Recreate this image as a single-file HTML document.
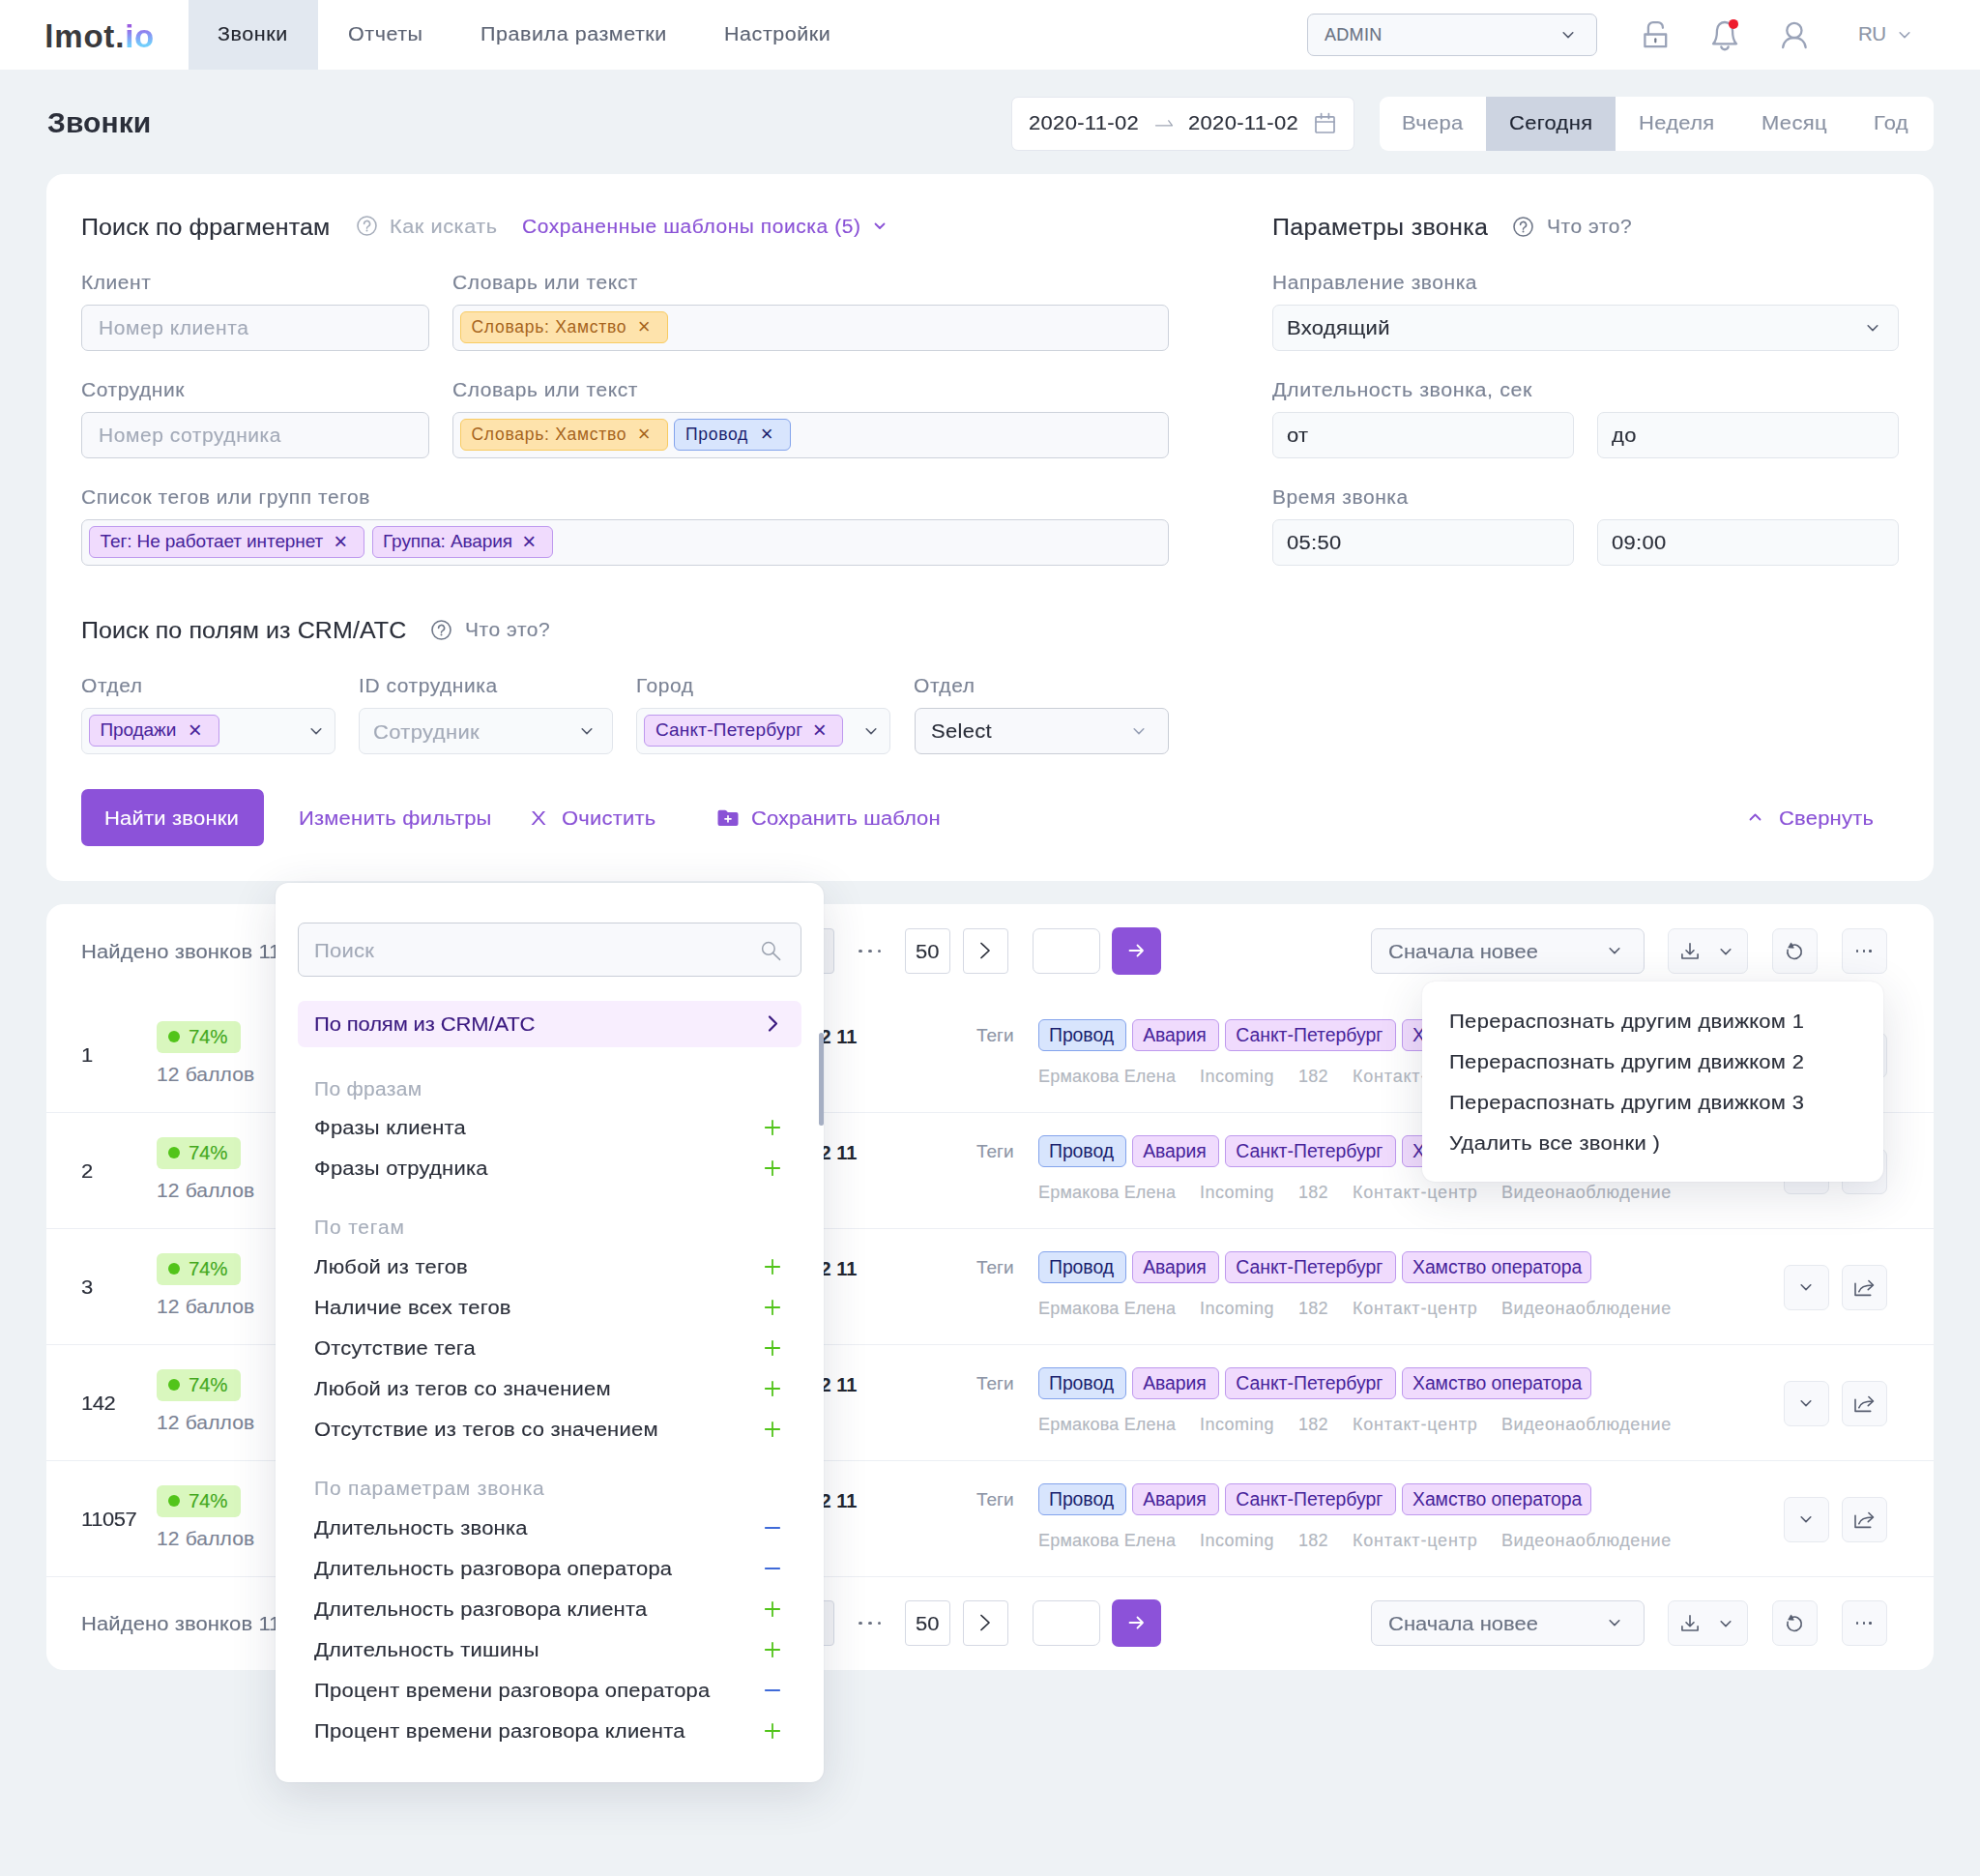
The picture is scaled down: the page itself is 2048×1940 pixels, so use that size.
<!DOCTYPE html>
<html lang="ru">
<head>
<meta charset="utf-8">
<title>Звонки</title>
<style>
*{box-sizing:border-box;margin:0;padding:0}
html,body{width:2048px;height:1940px;overflow:hidden}
body{background:#eef2f5;font-family:"Liberation Sans",sans-serif;color:#2b2f3a;position:relative;font-size:22px}
.abs{position:absolute}
.t{position:absolute;white-space:nowrap;line-height:1;-webkit-text-stroke:.12px currentColor;transform-origin:0 50%}
svg{position:absolute;overflow:visible}
/* nav */
.nav{position:absolute;left:0;top:0;width:2048px;height:72px;background:#fff}
.logo{-webkit-text-stroke:0;left:46.300px;top:20.500px;font-size:33px;font-weight:700;letter-spacing:.8px;color:#3a3a3d}
.logo b{font-weight:700;background:linear-gradient(175deg,#9a5ce0 24%,#8a8ef3 44%,#72cdfb 72%);-webkit-background-clip:text;background-clip:text;color:transparent}
.tab-active{position:absolute;left:195px;top:0;width:134px;height:72px;background:#e2e8f0}
.navt{font-size:20px;line-height:21.500px;letter-spacing:.51px;transform:scaleX(1.075);top:25.300px;color:#5d6474}
.seg{font-size:20.400px;line-height:22px;letter-spacing:.28px;transform:scaleX(1.078);color:#8a92a3}
.sel{position:absolute;border:1.500px solid #c6ccd8;border-radius:7px;background:#f7f9fc}
/* header row */
.box{position:absolute;background:#fff;border-radius:7px}
.card{position:absolute;left:48px;width:1952px;background:#fff;border-radius:18px}
.h2{margin-top:1.600px;font-size:23px;line-height:25px;letter-spacing:.32px;transform:scaleX(1.087);color:#2b2f3a}
.lbl{font-size:20px;line-height:21px;letter-spacing:.524px;transform:scaleX(1.05);color:#7b8395}
.hint{font-size:20px;line-height:21px;letter-spacing:.524px;transform:scaleX(1.05);color:#a7aebb}
.hint2{font-size:20px;line-height:21px;letter-spacing:.524px;transform:scaleX(1.05);color:#7b8395}
.pur{color:#8a52d6}
.ph{font-size:20px;line-height:21px;letter-spacing:.524px;transform:scaleX(1.05);color:#a3aab8}
.val{font-size:20px;line-height:22px;letter-spacing:.27px;transform:scaleX(1.1);color:#2b2f3a}
.val.dt{font-size:21px;transform:scaleX(1.048);letter-spacing:.29px}
.ph.big{font-size:20px;line-height:22px;transform:scaleX(1.1)}
.inp{position:absolute;height:48px;border:1.500px solid #cdd2db;border-radius:7px;background:#f8f9fc}
.tag{position:absolute;height:33px;border-radius:6px;border:1.500px solid;font-size:19px;letter-spacing:-.1px;line-height:30.500px;white-space:nowrap;padding-left:10.500px}
.inp.lt{border-color:#e1e5eb;background:#f8fafc}
.tag i{font-style:normal;position:absolute;right:16.700px;top:0;font-size:24px;letter-spacing:0}
.btn{margin-top:1px;font-size:20px;line-height:22px;letter-spacing:.18px;transform:scaleX(1.1)}
.found{margin-top:1px;font-size:20px;line-height:22px;letter-spacing:.09px;transform:scaleX(1.1);color:#6a7283}
.pg{position:absolute;height:47px;border:1.500px solid #d5d9e3;border-radius:4px;background:#fff}
.dots b{display:inline-block;position:absolute;top:0;width:3.700px;height:3.700px;border-radius:50%;background:#6b7282}
.dots b:nth-child(2){left:9.900px}.dots b:nth-child(3){left:19.800px}
.dots.sm b{width:2.400px;height:2.400px;background:#565d6f}
.dots.sm b:nth-child(2){left:6.800px}.dots.sm b:nth-child(3){left:13.600px}
.ib{position:absolute;height:47px;border:1.500px solid #e6e9ef;border-radius:7px;background:#f8f9fc}
.badge{width:87px;height:33px;border-radius:6px;background:#d9f7be}
.tag.r{padding-left:10px;height:32.500px;line-height:30.500px;font-size:19.400px;letter-spacing:-.05px}
.meta{margin-top:.7px;font-size:18px;letter-spacing:.2px;color:#b2b7c0}
.pop{position:absolute;background:#fff;border-radius:13px;box-shadow:0 12px 48px rgba(40,50,80,.14),0 0 2px rgba(40,50,80,.1)}
.mi{margin-top:.2px;font-size:20px;line-height:22px;letter-spacing:.18px;transform:scaleX(1.1);color:#2b2f3a}
.mh{margin-top:.6px;font-size:20px;line-height:21px;letter-spacing:.285px;transform:scaleX(1.05);color:#a7aebb}
.tg-y{background:#fee3ac;border-color:#f8cb62;color:#a6641c}
.tg-y,.tg-b.f{font-size:17.500px;letter-spacing:.72px;padding-left:11px}.tg-y i,.tg-b.f i{font-size:22px;right:17.500px}
.tg-b{background:#d8e5fd;border-color:#83a3ec;color:#1a1f6e}
.tg-p{background:#f0dbfd;border-color:#be99ee;color:#47239a}
</style>
</head>
<body>

<svg width="0" height="0" style="left:0;top:0"><defs>
<g id="q"><circle cx="10.5" cy="10.5" r="9.5" fill="none" stroke="#a7aebb" stroke-width="1.6"/><path d="M7.6 8.4a3 3 0 1 1 4.3 2.7c-.9.5-1.4 1-1.4 2" fill="none" stroke="#a7aebb" stroke-width="1.6" stroke-linecap="round"/><circle cx="10.5" cy="15.6" r="1" fill="#a7aebb"/></g>
<g id="q2"><circle cx="10.5" cy="10.5" r="9.5" fill="none" stroke="#6f7788" stroke-width="1.6"/><path d="M7.6 8.4a3 3 0 1 1 4.3 2.7c-.9.5-1.4 1-1.4 2" fill="none" stroke="#6f7788" stroke-width="1.6" stroke-linecap="round"/><circle cx="10.5" cy="15.6" r="1" fill="#6f7788"/></g>
</defs></svg>

<!-- NAV -->
<div class="nav">
  <div class="t logo">lmot.<b>io</b></div>
  <div class="tab-active"></div>
  <div class="t navt" style="left:225px;color:#23262f">Звонки</div>
  <div class="t navt" style="left:360px">Отчеты</div>
  <div class="t navt" style="left:497px">Правила разметки</div>
  <div class="t navt" style="left:749px">Настройки</div>
  <div class="sel" style="left:1352px;top:14px;width:300px;height:44px"></div>
  <div class="t" style="left:1370px;top:27px;font-size:18px;letter-spacing:.3px;color:#6a7283">ADMIN</div>
  <div class="t" style="left:1922px;top:25px;font-size:20.5px;letter-spacing:-.6px;color:#8d95a6">RU</div>
  <svg style="left:1615px;top:32px" width="14" height="9" viewBox="0 0 14 9"><path d="M2.200 1.800l4.800 4.800 4.800-4.800" fill="none" stroke="#565d6f" stroke-width="1.600" stroke-linecap="round" stroke-linejoin="round"/></svg>
  <svg style="left:1698px;top:20px" width="30" height="32" viewBox="0 0 30 32"><rect x="3.400" y="15.500" width="21.800" height="12.700" fill="none" stroke="#9aa3b8" stroke-width="2.300" stroke-linejoin="round"/><path d="M6.900 15.500V8.200a5 5 0 0 1 5-5h5a5 5 0 0 1 5 5v.6" fill="none" stroke="#9aa3b8" stroke-width="2.300" stroke-linecap="round"/><path d="M14.300 20.300v3" stroke="#6f7788" stroke-width="2.200" stroke-linecap="round"/></svg>
  <svg style="left:1768px;top:19px" width="32" height="36" viewBox="0 0 32 36"><path d="M4 26.300c2.500-2.300 4-6 4-14.300a8 8 0 0 1 16 0c0 8.300 1.500 12 4 14.300z" fill="none" stroke="#9aa3b8" stroke-width="2.300" stroke-linejoin="round"/><path d="M12.300 29.300a3.800 3.800 0 0 0 7.400 0" fill="none" stroke="#9aa3b8" stroke-width="2.300" stroke-linecap="round"/><circle cx="25" cy="5.900" r="5" fill="#ee1c2e"/></svg>
  <svg style="left:1840px;top:19px" width="32" height="34" viewBox="0 0 32 34"><circle cx="15.900" cy="12.500" r="7.600" fill="none" stroke="#9aa3b8" stroke-width="2.300"/><path d="M4.200 30c.5-6 5-10 11.700-10s11.200 4 11.700 10" fill="none" stroke="#9aa3b8" stroke-width="2.300" stroke-linecap="round"/></svg>
  <svg style="left:1963px;top:32px" width="14" height="9" viewBox="0 0 14 9"><path d="M2.200 1.800l4.800 4.800 4.800-4.800" fill="none" stroke="#9aa3b8" stroke-width="1.600" stroke-linecap="round" stroke-linejoin="round"/></svg>
</div>

<!-- PAGE HEADER -->
<div class="t" style="left:49px;top:112px;-webkit-text-stroke:0;font-size:29px;line-height:30px;transform:scaleX(1.035);font-weight:700;letter-spacing:.1px;color:#2b2f3a">Звонки</div>
<div class="box" style="left:1046px;top:100px;width:355px;height:56px;border:1px solid #e4e7ee"></div>
<div class="t val dt" style="left:1064px;top:116.300px">2020-11-02</div>
<div class="t val dt" style="left:1229px;top:116.300px">2020-11-02</div>
<svg style="left:1195px;top:123px" width="18" height="8" viewBox="0 0 18 8"><path d="M.5 6.800h17L13.800 1.800" fill="none" stroke="#a0a7b5" stroke-width="1.300" stroke-linecap="round" stroke-linejoin="round"/></svg>
<svg style="left:1359px;top:116px" width="23" height="23" viewBox="0 0 23 23"><rect x="2" y="4.800" width="19" height="16.200" rx="1" fill="none" stroke="#9aa3b8" stroke-width="1.700"/><path d="M2 10h19M7.600 1.500v5M15.400 1.500v5" stroke="#9aa3b8" stroke-width="1.700" stroke-linecap="round"/></svg>
<div class="box" style="left:1427px;top:100px;width:573px;height:56px;border-radius:9px"></div>
<div class="abs" style="left:1537px;top:100px;width:134px;height:56px;background:#cdd4e1"></div>
<div class="t seg" style="left:1450px;top:116.200px">Вчера</div>
<div class="t seg" style="left:1561px;top:116.200px;color:#1f2533">Сегодня</div>
<div class="t seg" style="left:1695px;top:116.200px">Неделя</div>
<div class="t seg" style="left:1822px;top:116.200px">Месяц</div>
<div class="t seg" style="left:1938px;top:116.200px">Год</div>

<!-- CARD 1: FILTERS -->
<div class="card" id="card1" style="top:180px;height:731px"></div>

<div class="t h2" style="left:84px;top:221px;letter-spacing:.1px">Поиск по фрагментам</div>
<svg class="qi" style="left:369px;top:223.300px" width="21" height="21" viewBox="0 0 21 21"><use href="#q"/></svg>
<div class="t hint" style="left:403px;top:223.500px;transform:scaleX(1.085)">Как искать</div>
<div class="t hint pur" style="left:540px;top:224px">Сохраненные шаблоны поиска (5)</div>
<svg style="left:904px;top:230px" width="12" height="8" viewBox="0 0 12 8"><path d="M1.5 1.5 6 6l4.5-4.5" fill="none" stroke="#8a52d6" stroke-width="1.8" stroke-linecap="round" stroke-linejoin="round"/></svg>

<div class="t lbl" style="left:84px;top:282px">Клиент</div>
<div class="inp" style="left:84px;top:315px;width:360px"></div>
<div class="t ph" style="left:102px;top:329px">Номер клиента</div>
<div class="t lbl" style="left:468px;top:282px">Словарь или текст</div>
<div class="inp" style="left:468px;top:315px;width:741px"></div>
<div class="tag tg-y" style="left:475.500px;top:322px;width:215.500px">Словарь: Хамство<i>×</i></div>

<div class="t lbl" style="left:84px;top:393px">Сотрудник</div>
<div class="inp" style="left:84px;top:426px;width:360px"></div>
<div class="t ph" style="left:102px;top:440px">Номер сотрудника</div>
<div class="t lbl" style="left:468px;top:393px">Словарь или текст</div>
<div class="inp" style="left:468px;top:426px;width:741px"></div>
<div class="tag tg-y" style="left:475.500px;top:433px;width:215.500px">Словарь: Хамство<i>×</i></div>
<div class="tag tg-b f" style="left:697px;top:433px;width:121px">Провод<i>×</i></div>

<div class="t lbl" style="left:84px;top:504px">Список тегов или групп тегов</div>
<div class="inp" style="left:84px;top:537px;width:1125px"></div>
<div class="tag tg-p" style="left:92px;top:544px;width:285px">Тег: Не работает интернет<i>×</i></div>
<div class="tag tg-p" style="left:384.500px;top:544px;width:187.500px">Группа: Авария<i>×</i></div>

<div class="t h2" style="left:1316px;top:221px">Параметры звонка</div>
<svg class="qi" style="left:1565px;top:224px" width="21" height="21" viewBox="0 0 21 21"><use href="#q2"/></svg>
<div class="t hint2" style="left:1600px;top:224px">Что это?</div>
<div class="t lbl" style="left:1316px;top:282px">Направление звонка</div>
<div class="inp lt" style="left:1316px;top:315px;width:648px"></div>
<div class="t val" style="left:1331px;top:328px">Входящий</div>
<svg style="left:1930px;top:335px" width="14" height="9" viewBox="0 0 14 9"><path d="M2.200 1.800l4.800 4.800 4.800-4.800" fill="none" stroke="#565d6f" stroke-width="1.600" stroke-linecap="round" stroke-linejoin="round"/></svg>
<div class="t lbl" style="left:1316px;top:393px;transform:scaleX(1.072)">Длительность звонка, сек</div>
<div class="inp lt" style="left:1316px;top:426px;width:312px"></div>
<div class="t val" style="left:1331px;top:439px">от</div>
<div class="inp lt" style="left:1652px;top:426px;width:312px"></div>
<div class="t val" style="left:1667px;top:439px">до</div>
<div class="t lbl" style="left:1316px;top:504px">Время звонка</div>
<div class="inp lt" style="left:1316px;top:537px;width:312px"></div>
<div class="t val" style="left:1331px;top:550px">05:50</div>
<div class="inp lt" style="left:1652px;top:537px;width:312px"></div>
<div class="t val" style="left:1667px;top:550px">09:00</div>

<div class="t h2" style="left:84px;top:638px;letter-spacing:.08px">Поиск по полям из CRM/ATC</div>
<svg class="qi" style="left:446px;top:641px" width="21" height="21" viewBox="0 0 21 21"><use href="#q2"/></svg>
<div class="t hint2" style="left:481px;top:641px">Что это?</div>

<div class="t lbl" style="left:84px;top:699px">Отдел</div>
<div class="inp lt" style="left:84px;top:732px;width:263px"></div>
<div class="tag tg-p" style="left:92px;top:739px;width:134.500px">Продажи<i>×</i></div>
<svg style="left:320px;top:752px" width="14" height="9" viewBox="0 0 14 9"><path d="M2.200 1.800l4.800 4.800 4.800-4.800" fill="none" stroke="#565d6f" stroke-width="1.600" stroke-linecap="round" stroke-linejoin="round"/></svg>
<div class="t lbl" style="left:371px;top:699px">ID сотрудника</div>
<div class="inp lt" style="left:371px;top:732px;width:263px"></div>
<div class="t ph big" style="left:386px;top:746px;letter-spacing:.32px">Сотрудник</div>
<svg style="left:600px;top:752px" width="14" height="9" viewBox="0 0 14 9"><path d="M2.200 1.800l4.800 4.800 4.800-4.800" fill="none" stroke="#565d6f" stroke-width="1.600" stroke-linecap="round" stroke-linejoin="round"/></svg>
<div class="t lbl" style="left:658px;top:699px">Город</div>
<div class="inp lt" style="left:658px;top:732px;width:263px"></div>
<div class="tag tg-p" style="left:666.400px;top:739px;width:206px;letter-spacing:.23px">Санкт-Петербург<i>×</i></div>
<svg style="left:894px;top:752px" width="14" height="9" viewBox="0 0 14 9"><path d="M2.200 1.800l4.800 4.800 4.800-4.800" fill="none" stroke="#565d6f" stroke-width="1.600" stroke-linecap="round" stroke-linejoin="round"/></svg>
<div class="t lbl" style="left:945px;top:699px">Отдел</div>
<div class="inp" style="left:945.500px;top:732px;width:263px;border-color:#c9cdd6"></div>
<div class="t val" style="left:963px;top:745px">Select</div>
<svg style="left:1171px;top:752px" width="14" height="9" viewBox="0 0 14 9"><path d="M2.200 1.800l4.800 4.800 4.800-4.800" fill="none" stroke="#9aa3b8" stroke-width="1.600" stroke-linecap="round" stroke-linejoin="round"/></svg>

<div class="abs" style="left:84px;top:816px;width:189px;height:59px;background:#8c52d9;border-radius:7px"></div>
<div class="t btn" style="left:108px;top:834px;color:#fff">Найти звонки</div>
<div class="t btn pur" style="left:309px;top:834px">Изменить фильтры</div>
<div class="t btn pur" style="left:548.500px;top:834px;letter-spacing:0;-webkit-text-stroke:0;transform:scaleX(1.2)">X</div>
<div class="t btn pur" style="left:581px;top:834px">Очистить</div>
<svg style="left:742px;top:837px" width="22" height="18" viewBox="0 0 22 18"><path d="M2.500 .8h5.300c.7 0 1.200.3 1.700.8l1.300 1.500h8.700a2 2 0 0 1 2 2v9.800a2 2 0 0 1-2 2h-17a2 2 0 0 1-2-2V2.800a2 2 0 0 1 2-2z" fill="#8a52d6"/><path d="M11 6.800v6M8 9.800h6" stroke="#fff" stroke-width="1.700" stroke-linecap="round"/></svg>
<div class="t btn pur" style="left:777px;top:834px;letter-spacing:.07px">Сохранить шаблон</div>
<div class="t btn pur" style="left:1840px;top:834px">Свернуть</div>
<svg style="left:1809px;top:840px" width="13" height="9" viewBox="0 0 13 9"><path d="M1.5 7.5l5-5 5 5" fill="none" stroke="#8a52d6" stroke-width="1.8" stroke-linecap="round" stroke-linejoin="round"/></svg>

<!-- CARD 2: RESULTS -->
<div class="card" id="card2" style="top:935px;height:792px"></div>
<div class="t found" style="left:84px;top:972px">Найдено звонков 11</div>
<div class="pg" style="left:820px;top:960px;width:43px;background:#f2f3f6"></div>
<div class="abs dots" style="left:888px;top:981.5px"><b></b><b></b><b></b></div>
<div class="pg" style="left:936px;top:960px;width:47px"></div><div class="t val" style="left:947px;top:973px;letter-spacing:0">50</div>
<div class="pg" style="left:996px;top:960px;width:47px"></div>
<svg style="left:1013px;top:974px" width="12" height="18" viewBox="0 0 12 18"><path d="M2 1.5l8 7.5-8 7.5" fill="none" stroke="#2b2f3a" stroke-width="1.7" stroke-linecap="round" stroke-linejoin="round"/></svg>
<div class="pg" style="left:1068px;top:960px;width:70px;border-radius:7px"></div>
<div class="abs" style="left:1150px;top:959.4px;width:51px;height:48.200px;border-radius:7px;background:#8c52d9"></div>
<svg style="left:1167px;top:976px" width="17" height="14" viewBox="0 0 17 14"><path d="M1.5 7h13.5M9.5 1.5L15 7l-5.500 5.500" fill="none" stroke="#fff" stroke-width="1.8" stroke-linecap="round" stroke-linejoin="round"/></svg>
<div class="inp" style="left:1418px;top:960px;width:283px;height:47px;border-color:#d5d9e3"></div>
<div class="t val" style="left:1436px;top:973px;color:#6a7283;letter-spacing:0">Сначала новее</div>
<svg style="left:1663px;top:979px" width="14" height="9" viewBox="0 0 14 9"><path d="M2.200 1.800l4.800 4.800 4.800-4.800" fill="none" stroke="#565d6f" stroke-width="1.600" stroke-linecap="round" stroke-linejoin="round"/></svg>
<div class="ib" style="left:1724.500px;top:960px;width:83px"></div>
<svg style="left:1739px;top:975px" width="18" height="17" viewBox="0 0 18 17"><path d="M9 .8v11M5 7.800l4 4 4-4M.9 11.800v4.200h16.200v-4.200" fill="none" stroke="#565d6f" stroke-width="1.600" stroke-linecap="round" stroke-linejoin="round"/></svg>
<svg style="left:1777.500px;top:980px" width="14" height="9" viewBox="0 0 14 9"><path d="M2.200 1.800l4.800 4.800 4.800-4.800" fill="none" stroke="#565d6f" stroke-width="1.600" stroke-linecap="round" stroke-linejoin="round"/></svg>
<div class="ib" style="left:1832.500px;top:960px;width:47px"></div>
<svg style="left:1846px;top:974px" width="20" height="20" viewBox="0 0 20 20"><path d="M7.300 3.600A7.200 7.200 0 1 1 3.100 8.300" fill="none" stroke="#565d6f" stroke-width="1.600" stroke-linecap="round"/><path d="M6.600 .9L3.700 5.900l5.600 .3z" fill="#565d6f" stroke="#565d6f" stroke-width=".8" stroke-linejoin="round"/></svg>
<div class="ib" style="left:1904.500px;top:960px;width:47px"></div>
<div class="abs dots sm" style="left:1919.800px;top:982.2px"><b></b><b></b><b></b></div>
<div class="t val" style="left:84px;top:1080px;letter-spacing:-.4px;margin-top:-.2px">1</div>
<div class="abs badge" style="left:162px;top:1055.7px"></div><div class="abs" style="left:174px;top:1066px;width:12px;height:12px;border-radius:50%;background:#52c41a"></div>
<div class="t" style="left:195px;top:1062px;font-size:20.500px;letter-spacing:-.3px;color:#43a81d">74%</div>
<div class="t" style="left:162px;top:1100px;font-size:21px;letter-spacing:.15px;color:#7b8395">12 баллов</div>
<div class="t" style="left:848.500px;top:1062px;font-size:20px;font-weight:700;-webkit-text-stroke:0;letter-spacing:0;color:#23262f">2 11</div>
<div class="t" style="left:1010px;top:1061px;font-size:19px;color:#8d95a6">Теги</div>
<div class="tag tg-b r" style="left:1074px;top:1054px;width:91px">Провод</div>
<div class="tag tg-p r" style="left:1171.200px;top:1054px;width:90px">Авария</div>
<div class="tag tg-p r" style="left:1267.200px;top:1054px;width:177px;letter-spacing:0">Санкт-Петербург</div>
<div class="tag tg-p r" style="left:1450px;top:1054px;width:196px">Хамство оператора</div>
<div class="t meta" style="left:1074px;top:1103px">Ермакова Елена</div>
<div class="t meta" style="left:1241px;top:1103px;letter-spacing:.5px">Incoming</div>
<div class="t meta" style="left:1343px;top:1103px">182</div>
<div class="t meta" style="left:1399px;top:1103px;letter-spacing:.8px">Контакт-центр</div>
<div class="t meta" style="left:1553px;top:1103px;letter-spacing:.6px">Видеонаоблюдение</div>
<div class="ib" style="left:1844.500px;top:1068px;width:47px"></div>
<svg style="left:1861px;top:1087px" width="14" height="9" viewBox="0 0 14 9"><path d="M2.200 1.800l4.800 4.800 4.800-4.800" fill="none" stroke="#565d6f" stroke-width="1.600" stroke-linecap="round" stroke-linejoin="round"/></svg>
<div class="ib" style="left:1904.500px;top:1068px;width:47px"></div>
<svg style="left:1917px;top:1083px" width="22" height="18" viewBox="0 0 22 18"><path d="M2 4.200V16.400H17.700M5.800 12.700C7.200 8.400 11 6 19.800 6M15.900 1.500L20.500 6l-5.200 4.700" fill="none" stroke="#565d6f" stroke-width="1.600" stroke-linecap="round" stroke-linejoin="round"/></svg>
<div class="abs" style="left:48px;top:1150px;width:1952px;height:1px;background:#eceff4"></div>
<div class="t val" style="left:84px;top:1200px;letter-spacing:-.4px;margin-top:-.2px">2</div>
<div class="abs badge" style="left:162px;top:1175.7px"></div><div class="abs" style="left:174px;top:1186px;width:12px;height:12px;border-radius:50%;background:#52c41a"></div>
<div class="t" style="left:195px;top:1182px;font-size:20.500px;letter-spacing:-.3px;color:#43a81d">74%</div>
<div class="t" style="left:162px;top:1220px;font-size:21px;letter-spacing:.15px;color:#7b8395">12 баллов</div>
<div class="t" style="left:848.500px;top:1182px;font-size:20px;font-weight:700;-webkit-text-stroke:0;letter-spacing:0;color:#23262f">2 11</div>
<div class="t" style="left:1010px;top:1181px;font-size:19px;color:#8d95a6">Теги</div>
<div class="tag tg-b r" style="left:1074px;top:1174px;width:91px">Провод</div>
<div class="tag tg-p r" style="left:1171.200px;top:1174px;width:90px">Авария</div>
<div class="tag tg-p r" style="left:1267.200px;top:1174px;width:177px;letter-spacing:0">Санкт-Петербург</div>
<div class="tag tg-p r" style="left:1450px;top:1174px;width:196px">Хамство оператора</div>
<div class="t meta" style="left:1074px;top:1223px">Ермакова Елена</div>
<div class="t meta" style="left:1241px;top:1223px;letter-spacing:.5px">Incoming</div>
<div class="t meta" style="left:1343px;top:1223px">182</div>
<div class="t meta" style="left:1399px;top:1223px;letter-spacing:.8px">Контакт-центр</div>
<div class="t meta" style="left:1553px;top:1223px;letter-spacing:.6px">Видеонаоблюдение</div>
<div class="ib" style="left:1844.500px;top:1188px;width:47px"></div>
<svg style="left:1861px;top:1207px" width="14" height="9" viewBox="0 0 14 9"><path d="M2.200 1.800l4.800 4.800 4.800-4.800" fill="none" stroke="#565d6f" stroke-width="1.600" stroke-linecap="round" stroke-linejoin="round"/></svg>
<div class="ib" style="left:1904.500px;top:1188px;width:47px"></div>
<svg style="left:1917px;top:1203px" width="22" height="18" viewBox="0 0 22 18"><path d="M2 4.200V16.400H17.700M5.800 12.700C7.200 8.400 11 6 19.800 6M15.900 1.500L20.500 6l-5.200 4.700" fill="none" stroke="#565d6f" stroke-width="1.600" stroke-linecap="round" stroke-linejoin="round"/></svg>
<div class="abs" style="left:48px;top:1270px;width:1952px;height:1px;background:#eceff4"></div>
<div class="t val" style="left:84px;top:1320px;letter-spacing:-.4px;margin-top:-.2px">3</div>
<div class="abs badge" style="left:162px;top:1295.7px"></div><div class="abs" style="left:174px;top:1306px;width:12px;height:12px;border-radius:50%;background:#52c41a"></div>
<div class="t" style="left:195px;top:1302px;font-size:20.500px;letter-spacing:-.3px;color:#43a81d">74%</div>
<div class="t" style="left:162px;top:1340px;font-size:21px;letter-spacing:.15px;color:#7b8395">12 баллов</div>
<div class="t" style="left:848.500px;top:1302px;font-size:20px;font-weight:700;-webkit-text-stroke:0;letter-spacing:0;color:#23262f">2 11</div>
<div class="t" style="left:1010px;top:1301px;font-size:19px;color:#8d95a6">Теги</div>
<div class="tag tg-b r" style="left:1074px;top:1294px;width:91px">Провод</div>
<div class="tag tg-p r" style="left:1171.200px;top:1294px;width:90px">Авария</div>
<div class="tag tg-p r" style="left:1267.200px;top:1294px;width:177px;letter-spacing:0">Санкт-Петербург</div>
<div class="tag tg-p r" style="left:1450px;top:1294px;width:196px">Хамство оператора</div>
<div class="t meta" style="left:1074px;top:1343px">Ермакова Елена</div>
<div class="t meta" style="left:1241px;top:1343px;letter-spacing:.5px">Incoming</div>
<div class="t meta" style="left:1343px;top:1343px">182</div>
<div class="t meta" style="left:1399px;top:1343px;letter-spacing:.8px">Контакт-центр</div>
<div class="t meta" style="left:1553px;top:1343px;letter-spacing:.6px">Видеонаоблюдение</div>
<div class="ib" style="left:1844.500px;top:1308px;width:47px"></div>
<svg style="left:1861px;top:1327px" width="14" height="9" viewBox="0 0 14 9"><path d="M2.200 1.800l4.800 4.800 4.800-4.800" fill="none" stroke="#565d6f" stroke-width="1.600" stroke-linecap="round" stroke-linejoin="round"/></svg>
<div class="ib" style="left:1904.500px;top:1308px;width:47px"></div>
<svg style="left:1917px;top:1323px" width="22" height="18" viewBox="0 0 22 18"><path d="M2 4.200V16.400H17.700M5.800 12.700C7.200 8.400 11 6 19.800 6M15.900 1.500L20.500 6l-5.200 4.700" fill="none" stroke="#565d6f" stroke-width="1.600" stroke-linecap="round" stroke-linejoin="round"/></svg>
<div class="abs" style="left:48px;top:1390px;width:1952px;height:1px;background:#eceff4"></div>
<div class="t val" style="left:84px;top:1440px;letter-spacing:-.4px;margin-top:-.2px">142</div>
<div class="abs badge" style="left:162px;top:1415.7px"></div><div class="abs" style="left:174px;top:1426px;width:12px;height:12px;border-radius:50%;background:#52c41a"></div>
<div class="t" style="left:195px;top:1422px;font-size:20.500px;letter-spacing:-.3px;color:#43a81d">74%</div>
<div class="t" style="left:162px;top:1460px;font-size:21px;letter-spacing:.15px;color:#7b8395">12 баллов</div>
<div class="t" style="left:848.500px;top:1422px;font-size:20px;font-weight:700;-webkit-text-stroke:0;letter-spacing:0;color:#23262f">2 11</div>
<div class="t" style="left:1010px;top:1421px;font-size:19px;color:#8d95a6">Теги</div>
<div class="tag tg-b r" style="left:1074px;top:1414px;width:91px">Провод</div>
<div class="tag tg-p r" style="left:1171.200px;top:1414px;width:90px">Авария</div>
<div class="tag tg-p r" style="left:1267.200px;top:1414px;width:177px;letter-spacing:0">Санкт-Петербург</div>
<div class="tag tg-p r" style="left:1450px;top:1414px;width:196px">Хамство оператора</div>
<div class="t meta" style="left:1074px;top:1463px">Ермакова Елена</div>
<div class="t meta" style="left:1241px;top:1463px;letter-spacing:.5px">Incoming</div>
<div class="t meta" style="left:1343px;top:1463px">182</div>
<div class="t meta" style="left:1399px;top:1463px;letter-spacing:.8px">Контакт-центр</div>
<div class="t meta" style="left:1553px;top:1463px;letter-spacing:.6px">Видеонаоблюдение</div>
<div class="ib" style="left:1844.500px;top:1428px;width:47px"></div>
<svg style="left:1861px;top:1447px" width="14" height="9" viewBox="0 0 14 9"><path d="M2.200 1.800l4.800 4.800 4.800-4.800" fill="none" stroke="#565d6f" stroke-width="1.600" stroke-linecap="round" stroke-linejoin="round"/></svg>
<div class="ib" style="left:1904.500px;top:1428px;width:47px"></div>
<svg style="left:1917px;top:1443px" width="22" height="18" viewBox="0 0 22 18"><path d="M2 4.200V16.400H17.700M5.800 12.700C7.200 8.400 11 6 19.800 6M15.900 1.500L20.500 6l-5.200 4.700" fill="none" stroke="#565d6f" stroke-width="1.600" stroke-linecap="round" stroke-linejoin="round"/></svg>
<div class="abs" style="left:48px;top:1510px;width:1952px;height:1px;background:#eceff4"></div>
<div class="t val" style="left:84px;top:1560px;letter-spacing:-.4px;margin-top:-.2px">11057</div>
<div class="abs badge" style="left:162px;top:1535.7px"></div><div class="abs" style="left:174px;top:1546px;width:12px;height:12px;border-radius:50%;background:#52c41a"></div>
<div class="t" style="left:195px;top:1542px;font-size:20.500px;letter-spacing:-.3px;color:#43a81d">74%</div>
<div class="t" style="left:162px;top:1580px;font-size:21px;letter-spacing:.15px;color:#7b8395">12 баллов</div>
<div class="t" style="left:848.500px;top:1542px;font-size:20px;font-weight:700;-webkit-text-stroke:0;letter-spacing:0;color:#23262f">2 11</div>
<div class="t" style="left:1010px;top:1541px;font-size:19px;color:#8d95a6">Теги</div>
<div class="tag tg-b r" style="left:1074px;top:1534px;width:91px">Провод</div>
<div class="tag tg-p r" style="left:1171.200px;top:1534px;width:90px">Авария</div>
<div class="tag tg-p r" style="left:1267.200px;top:1534px;width:177px;letter-spacing:0">Санкт-Петербург</div>
<div class="tag tg-p r" style="left:1450px;top:1534px;width:196px">Хамство оператора</div>
<div class="t meta" style="left:1074px;top:1583px">Ермакова Елена</div>
<div class="t meta" style="left:1241px;top:1583px;letter-spacing:.5px">Incoming</div>
<div class="t meta" style="left:1343px;top:1583px">182</div>
<div class="t meta" style="left:1399px;top:1583px;letter-spacing:.8px">Контакт-центр</div>
<div class="t meta" style="left:1553px;top:1583px;letter-spacing:.6px">Видеонаоблюдение</div>
<div class="ib" style="left:1844.500px;top:1548px;width:47px"></div>
<svg style="left:1861px;top:1567px" width="14" height="9" viewBox="0 0 14 9"><path d="M2.200 1.800l4.800 4.800 4.800-4.800" fill="none" stroke="#565d6f" stroke-width="1.600" stroke-linecap="round" stroke-linejoin="round"/></svg>
<div class="ib" style="left:1904.500px;top:1548px;width:47px"></div>
<svg style="left:1917px;top:1563px" width="22" height="18" viewBox="0 0 22 18"><path d="M2 4.200V16.400H17.700M5.800 12.700C7.200 8.400 11 6 19.800 6M15.900 1.500L20.500 6l-5.200 4.700" fill="none" stroke="#565d6f" stroke-width="1.600" stroke-linecap="round" stroke-linejoin="round"/></svg>
<div class="abs" style="left:48px;top:1630px;width:1952px;height:1px;background:#eceff4"></div>
<div class="t found" style="left:84px;top:1667px">Найдено звонков 11</div>
<div class="pg" style="left:820px;top:1655px;width:43px;background:#f2f3f6"></div>
<div class="abs dots" style="left:888px;top:1676.5px"><b></b><b></b><b></b></div>
<div class="pg" style="left:936px;top:1655px;width:47px"></div><div class="t val" style="left:947px;top:1668px;letter-spacing:0">50</div>
<div class="pg" style="left:996px;top:1655px;width:47px"></div>
<svg style="left:1013px;top:1669px" width="12" height="18" viewBox="0 0 12 18"><path d="M2 1.5l8 7.5-8 7.5" fill="none" stroke="#2b2f3a" stroke-width="1.7" stroke-linecap="round" stroke-linejoin="round"/></svg>
<div class="pg" style="left:1068px;top:1655px;width:70px;border-radius:7px"></div>
<div class="abs" style="left:1150px;top:1654.4px;width:51px;height:48.200px;border-radius:7px;background:#8c52d9"></div>
<svg style="left:1167px;top:1671px" width="17" height="14" viewBox="0 0 17 14"><path d="M1.5 7h13.5M9.5 1.5L15 7l-5.500 5.500" fill="none" stroke="#fff" stroke-width="1.8" stroke-linecap="round" stroke-linejoin="round"/></svg>
<div class="inp" style="left:1418px;top:1655px;width:283px;height:47px;border-color:#d5d9e3"></div>
<div class="t val" style="left:1436px;top:1668px;color:#6a7283;letter-spacing:0">Сначала новее</div>
<svg style="left:1663px;top:1674px" width="14" height="9" viewBox="0 0 14 9"><path d="M2.200 1.800l4.800 4.800 4.800-4.800" fill="none" stroke="#565d6f" stroke-width="1.600" stroke-linecap="round" stroke-linejoin="round"/></svg>
<div class="ib" style="left:1724.500px;top:1655px;width:83px"></div>
<svg style="left:1739px;top:1670px" width="18" height="17" viewBox="0 0 18 17"><path d="M9 .8v11M5 7.800l4 4 4-4M.9 11.800v4.200h16.200v-4.200" fill="none" stroke="#565d6f" stroke-width="1.600" stroke-linecap="round" stroke-linejoin="round"/></svg>
<svg style="left:1777.500px;top:1675px" width="14" height="9" viewBox="0 0 14 9"><path d="M2.200 1.800l4.800 4.800 4.800-4.800" fill="none" stroke="#565d6f" stroke-width="1.600" stroke-linecap="round" stroke-linejoin="round"/></svg>
<div class="ib" style="left:1832.500px;top:1655px;width:47px"></div>
<svg style="left:1846px;top:1669px" width="20" height="20" viewBox="0 0 20 20"><path d="M7.300 3.600A7.200 7.200 0 1 1 3.100 8.300" fill="none" stroke="#565d6f" stroke-width="1.600" stroke-linecap="round"/><path d="M6.600 .9L3.700 5.900l5.600 .3z" fill="#565d6f" stroke="#565d6f" stroke-width=".8" stroke-linejoin="round"/></svg>
<div class="ib" style="left:1904.500px;top:1655px;width:47px"></div>
<div class="abs dots sm" style="left:1919.800px;top:1677.2px"><b></b><b></b><b></b></div>

<!-- POPUP MENU -->
<div class="pop" style="left:1471px;top:1015px;width:477px;height:207px"></div>
<div class="t mi" style="left:1499px;top:1045px;letter-spacing:.27px;margin-top:0">Перераспознать другим движком 1</div>
<div class="t mi" style="left:1499px;top:1087px;letter-spacing:.27px;margin-top:0">Перераспознать другим движком 2</div>
<div class="t mi" style="left:1499px;top:1129px;letter-spacing:.27px;margin-top:0">Перераспознать другим движком 3</div>
<div class="t mi" style="left:1499px;top:1171px;letter-spacing:.27px;margin-top:0">Удалить все звонки )</div>

<!-- FILTER DROPDOWN -->
<div class="pop" style="left:285px;top:913px;width:567px;height:930px"></div>
<div class="inp" style="left:308px;top:953.700px;width:521px;height:56px;border-color:#c9ced7"></div>
<div class="t ph big" style="left:325px;top:972px;letter-spacing:.18px">Поиск</div>
<svg style="left:787px;top:972.500px" width="21" height="21" viewBox="0 0 21 21"><circle cx="7.900" cy="7.900" r="6.300" fill="none" stroke="#9ca3b0" stroke-width="1.500"/><path d="M12.600 12.600l7 6.800" stroke="#9ca3b0" stroke-width="1.500" stroke-linecap="round"/></svg>
<div class="abs" style="left:308px;top:1035px;width:521px;height:48px;border-radius:7px;background:#f8eefe"></div>
<div class="t mi" style="left:325px;top:1048px;color:#3b1a80;letter-spacing:-.12px">По полям из CRM/ATC</div>
<svg style="left:794px;top:1050px" width="11" height="17" viewBox="0 0 11 17"><path d="M2 1.500l7 7-7 7" fill="none" stroke="#3b1a80" stroke-width="2.200" stroke-linecap="round" stroke-linejoin="round"/></svg>
<div class="abs" style="left:847px;top:1068px;width:5px;height:96px;border-radius:3px;background:#a6afc3"></div>
<div class="t mh" style="left:325px;top:1115px">По фразам</div>
<div class="t mi" style="left:325px;top:1155px">Фразы клиента</div>
<svg style="left:791px;top:1158px" width="16" height="16" viewBox="0 0 16 16"><path d="M8 .8v14.400M.8 8h14.400" stroke="#52c41a" stroke-width="1.800" stroke-linecap="round"/></svg>
<div class="t mi" style="left:325px;top:1197px">Фразы отрудника</div>
<svg style="left:791px;top:1200px" width="16" height="16" viewBox="0 0 16 16"><path d="M8 .8v14.400M.8 8h14.400" stroke="#52c41a" stroke-width="1.800" stroke-linecap="round"/></svg>
<div class="t mh" style="left:325px;top:1258px;letter-spacing:.8px">По тегам</div>
<div class="t mi" style="left:325px;top:1299px">Любой из тегов</div>
<svg style="left:791px;top:1302px" width="16" height="16" viewBox="0 0 16 16"><path d="M8 .8v14.400M.8 8h14.400" stroke="#52c41a" stroke-width="1.800" stroke-linecap="round"/></svg>
<div class="t mi" style="left:325px;top:1341px">Наличие всех тегов</div>
<svg style="left:791px;top:1344px" width="16" height="16" viewBox="0 0 16 16"><path d="M8 .8v14.400M.8 8h14.400" stroke="#52c41a" stroke-width="1.800" stroke-linecap="round"/></svg>
<div class="t mi" style="left:325px;top:1383px">Отсутствие тега</div>
<svg style="left:791px;top:1386px" width="16" height="16" viewBox="0 0 16 16"><path d="M8 .8v14.400M.8 8h14.400" stroke="#52c41a" stroke-width="1.800" stroke-linecap="round"/></svg>
<div class="t mi" style="left:325px;top:1425px">Любой из тегов со значением</div>
<svg style="left:791px;top:1428px" width="16" height="16" viewBox="0 0 16 16"><path d="M8 .8v14.400M.8 8h14.400" stroke="#52c41a" stroke-width="1.800" stroke-linecap="round"/></svg>
<div class="t mi" style="left:325px;top:1467px">Отсутствие из тегов со значением</div>
<svg style="left:791px;top:1470px" width="16" height="16" viewBox="0 0 16 16"><path d="M8 .8v14.400M.8 8h14.400" stroke="#52c41a" stroke-width="1.800" stroke-linecap="round"/></svg>
<div class="t mh" style="left:325px;top:1528px;letter-spacing:.75px">По параметрам звонка</div>
<div class="t mi" style="left:325px;top:1569px">Длительность звонка</div>
<svg style="left:791px;top:1572px" width="16" height="16" viewBox="0 0 16 16"><path d="M.8 8h14.400" stroke="#3f6ad8" stroke-width="1.800" stroke-linecap="round"/></svg>
<div class="t mi" style="left:325px;top:1611px">Длительность разговора оператора</div>
<svg style="left:791px;top:1614px" width="16" height="16" viewBox="0 0 16 16"><path d="M.8 8h14.400" stroke="#3f6ad8" stroke-width="1.800" stroke-linecap="round"/></svg>
<div class="t mi" style="left:325px;top:1653px">Длительность разговора клиента</div>
<svg style="left:791px;top:1656px" width="16" height="16" viewBox="0 0 16 16"><path d="M8 .8v14.400M.8 8h14.400" stroke="#52c41a" stroke-width="1.800" stroke-linecap="round"/></svg>
<div class="t mi" style="left:325px;top:1695px">Длительность тишины</div>
<svg style="left:791px;top:1698px" width="16" height="16" viewBox="0 0 16 16"><path d="M8 .8v14.400M.8 8h14.400" stroke="#52c41a" stroke-width="1.800" stroke-linecap="round"/></svg>
<div class="t mi" style="left:325px;top:1737px">Процент времени разговора оператора</div>
<svg style="left:791px;top:1740px" width="16" height="16" viewBox="0 0 16 16"><path d="M.8 8h14.400" stroke="#3f6ad8" stroke-width="1.800" stroke-linecap="round"/></svg>
<div class="t mi" style="left:325px;top:1779px">Процент времени разговора клиента</div>
<svg style="left:791px;top:1782px" width="16" height="16" viewBox="0 0 16 16"><path d="M8 .8v14.400M.8 8h14.400" stroke="#52c41a" stroke-width="1.800" stroke-linecap="round"/></svg>

</body>
</html>
